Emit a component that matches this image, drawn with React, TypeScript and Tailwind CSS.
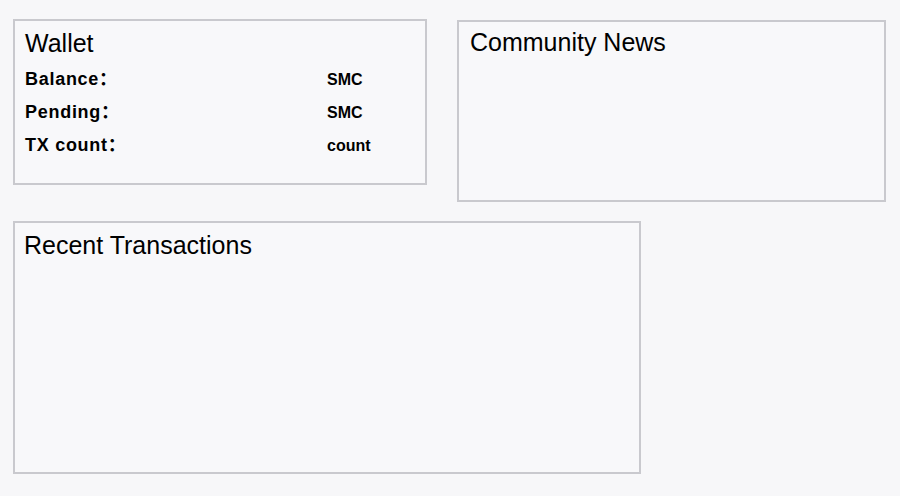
import React from "react";

const rows: { label: string; value: string }[] = [
  { label: "Balance：", value: "SMC" },
  { label: "Pending：", value: "SMC" },
  { label: "TX count：", value: "count" },
];

const App = (): React.ReactNode => {
  return (
    <div className=" min-h-[496px] w-[900px] bg-[#f7f7f9] pt-[19px] pl-[13px] font-['Liberation_Sans','Noto_Sans_CJK_SC',sans-serif] text-black">
      <div className=" flex items-start gap-[30px]">
        <div className=" w-[414px] h-[166px] border-2 border-[#c9c9ce] bg-[#f8f8fa] pl-[10px] pt-[7px]">
          <h2 className=" text-[25px] leading-[30px]">Wallet</h2>
          <div className=" flex flex-col mt-[5px]">
            {rows.map((row, id) => {
              return (
                <div key={id} className=" flex items-center h-[33px]">
                  <span className=" w-[302px] text-[18px] font-semibold tracking-[0.04em]">{row.label}</span>
                  <span className=" text-[16px] font-semibold">{row.value}</span>
                </div>
              );
            })}
          </div>
        </div>
        <div className=" mt-[1px] w-[429px] h-[182px] border-2 border-[#c9c9ce] bg-[#f8f8fa] pl-[11px] pt-[5px]">
          <h2 className=" text-[25px] leading-[30px]">Community News</h2>
        </div>
      </div>
      <div className=" mt-[19px] w-[628px] h-[253px] border-2 border-[#c9c9ce] bg-[#f8f8fa] pl-[9px] pt-[7px]">
        <h2 className=" text-[25px] leading-[30px]">Recent Transactions</h2>
      </div>
    </div>
  );
};

export default App;
